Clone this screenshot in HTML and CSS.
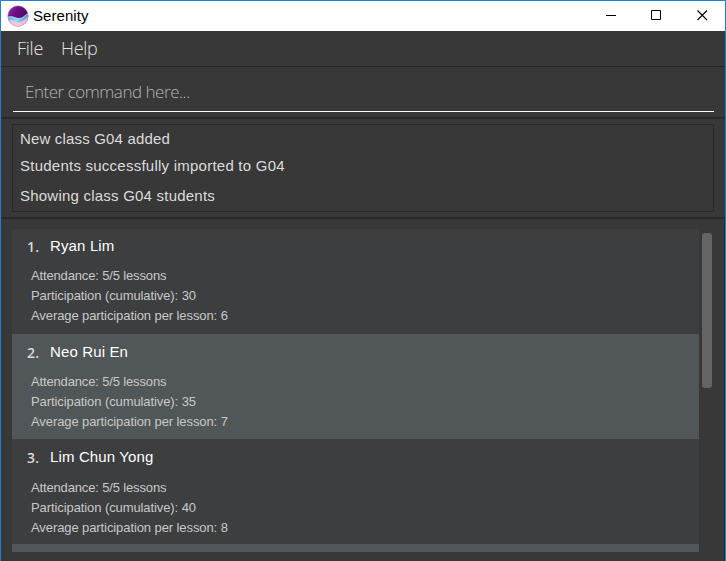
FILE: index.html
```html
<!DOCTYPE html>
<html lang="en">
<head>
<meta charset="utf-8">
<title>Serenity</title>
<link rel="stylesheet" href="styles.css">
</head>
<body>
<div class="window">
  <header class="titlebar">
    <svg class="logo" width="22" height="22" viewBox="0 0 22 22">
      <defs>
        <linearGradient id="purple" x1="0" y1="0" x2="1" y2=".8"><stop offset="0" stop-color="#a03bac"/><stop offset=".4" stop-color="#6b0b84"/><stop offset="1" stop-color="#38104d"/></linearGradient>
        <linearGradient id="wave" x1="0" y1="0" x2="1" y2=".2"><stop offset="0" stop-color="#62a4e0"/><stop offset=".55" stop-color="#86dcf8"/><stop offset="1" stop-color="#4c86dc"/></linearGradient>
        <linearGradient id="pink" x1="0" y1="0" x2="1" y2="0"><stop offset="0" stop-color="#d9b4ee"/><stop offset=".5" stop-color="#fbd0d2"/><stop offset="1" stop-color="#e7a3d6"/></linearGradient>
        <clipPath id="disc"><circle cx="11" cy="11" r="10.3"/></clipPath>
      </defs>
      <g clip-path="url(#disc)">
        <rect width="22" height="22" fill="url(#purple)"/>
        <path d="M0 12.500C5 10 8 13.500 12 13.500S18 10 22 8V22H0Z" fill="url(#wave)"/>
        <path d="M0 16.500C4 14 6 15 10 17S17 14 22 11V22H0Z" fill="url(#pink)"/>
        <path d="M0 12.500C5 10 8 13.500 12 13.500S18 10 22 8" fill="none" stroke="#d5e4fb" stroke-width=".7"/>
      </g>
      <circle cx="11" cy="11" r="10.300" fill="none" stroke="#b8a6c5" stroke-width=".5"/>
    </svg>
    <span class="title">Serenity</span>
    <div class="controls">
      <svg width="11" height="11" viewBox="0 0 11 11" shape-rendering="crispEdges"><path d="M1 5h10v1H1z"/></svg>
      <svg width="11" height="11" viewBox="0 0 11 11"><path d="M.5.5h9v9h-9z" fill="none" stroke="#000"/></svg>
      <svg width="11" height="11" viewBox="0 0 11 11"><path d="M.5.5l9.500 9.500M10 .5L.5 10" fill="none" stroke="#000" stroke-width="1.100"/></svg>
    </div>
  </header>
  <nav class="menu"><span class="file">File</span><span class="help">Help</span></nav>
  <section class="command"><div class="field"><span>Enter command here...</span></div></section>
  <section class="result">
    <div class="messages">
      <p><span class="m1">New class G04 added</span></p>
      <p><span class="m2">Students successfully imported to G04</span></p>
      <p><span class="m3">Showing class G04 students</span></p>
    </div>
  </section>
  <main class="content">
    <div class="list">
      <article class="student first">
        <h2><b>1.</b><span class="name">Ryan Lim</span></h2>
        <div class="details"><p class="att">Attendance: 5/5 lessons</p><p class="part">Participation (cumulative): 30</p><p class="avg">Average participation per lesson: 6</p></div>
      </article>
      <article class="student alt">
        <h2><b>2.</b><span class="name">Neo Rui En</span></h2>
        <div class="details"><p class="att">Attendance: 5/5 lessons</p><p class="part">Participation (cumulative): 35</p><p class="avg">Average participation per lesson: 7</p></div>
      </article>
      <article class="student third">
        <h2><b>3.</b><span class="name">Lim Chun Yong</span></h2>
        <div class="details"><p class="att">Attendance: 5/5 lessons</p><p class="part">Participation (cumulative): 40</p><p class="avg">Average participation per lesson: 8</p></div>
      </article>
      <article class="student alt"></article>
    </div>
    <div class="scrollbar"></div>
  </main>
</div>
</body>
</html>
```
FILE: styles.css
```css
* { box-sizing: border-box; }
body, h2, p { margin: 0; font-weight: normal; }
body { overflow: hidden; font-family: "Liberation Sans", sans-serif; white-space: nowrap; }
.window {
  width: 726px; height: 561px; display: flex; flex-direction: column;
  background: #383838; border: 1px solid #1c80d4; border-bottom: 0;
}
.titlebar { height: 30px; flex: none; display: flex; align-items: center; background: #fff; padding: 0 17px 0 6px; }
.title { font-size: 15px; line-height: 20px; margin-left: 4px; color: #000; letter-spacing: .05px; }
.controls { display: flex; gap: 35px; margin-left: auto; padding-bottom: 1px; }
.controls svg { display: block; }
.menu {
  height: 36px; flex: none; display: flex; gap: 18px; padding: 4px 0 0 16px;
  border-bottom: 1px solid #292929; font: 300 18px/26px "Open Sans", sans-serif; color: #e4e4e4;
}
.file { letter-spacing: -.25px; }
.help { letter-spacing: -.3px; }
.command { height: 52px; flex: none; padding: 9px 11px 0 12px; border-bottom: 2px solid #292929; }
.field { height: 36px; border-bottom: 1px solid #fff; padding: 4px 0 0 12px; font: 300 17px/24px "Open Sans", sans-serif; letter-spacing: -.47px; color: #b4b4b4; }
.result { height: 100px; flex: none; padding: 5px 11px 0; border-bottom: 2px solid #292929; }
.messages { height: 88px; border: 1px solid #292929; padding: 4px 0 0 7px; font-size: 15px; line-height: 20px; color: #dcdcdc; }
.messages p + p { margin-top: 7px; }
.messages p:last-child { margin-top: 10px; }
.m1 { letter-spacing: .17px; }
.m2 { letter-spacing: .24px; }
.m3 { letter-spacing: .22px; }
.content { flex: 1; display: flex; gap: 3px; padding: 10px 0 9px 11px; border-right: 1px solid #292929; }
.list { width: 687px; height: 323px; overflow: hidden; }
.student { height: 105px; background: #3c3e3f; padding: 7px 0 0 15px; }
.student.alt { background: #515658; }
.student h2 { display: flex; font-size: 15px; line-height: 20px; color: #fff; }
.student b { width: 23px; padding-top: 1px; font: 600 14px/20px "Open Sans", sans-serif; letter-spacing: .3px; color: #dadada; }
.name { letter-spacing: .14px; }
.details { padding: 9px 0 0 4px; font-size: 13px; line-height: 20px; letter-spacing: -.09px; color: #c9c9c9; }
.att { letter-spacing: -.15px; }
.student.alt, .student.third { padding-top: 8px; }
.third .details { padding-top: 10px; }
.scrollbar { width: 10px; height: 155px; margin-top: 4px; border-radius: 3px; background: #646464; }
```
